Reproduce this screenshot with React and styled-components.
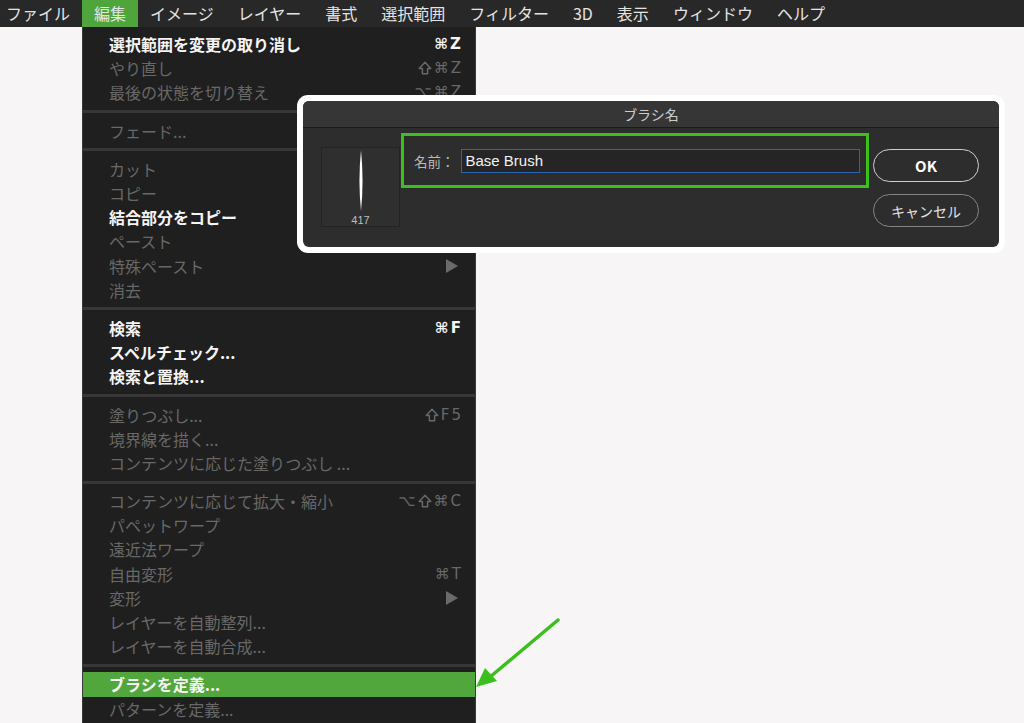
import React from "react";
import styled, { createGlobalStyle } from "styled-components";

const GlobalStyle = createGlobalStyle`
  html, body {
    margin: 0;
    padding: 0;
    background: #f7f5f6;
  }
  body {
    font-family: "Noto Sans CJK JP", "Noto Sans", sans-serif;
  }
`;

const Page = styled.div`
  position: relative;
  width: 1024px;
  height: 723px;
  overflow: hidden;
  display: flex;
  flex-direction: column;
`;

const MenuBar = styled.nav`
  display: flex;
  height: 27px;
  padding-left: 6px;
  background: #282828;
  flex-shrink: 0;
`;

const BarItem = styled.div`
  padding: 0 12px;
  line-height: 27px;
  font-size: 16px;
  color: #e4e4e4;
  background: ${(p) => (p.$open ? "#4fa53b" : "transparent")};

  &:first-child {
    padding-left: 0;
  }
`;

const Stage = styled.div`
  position: relative;
  flex: 1;
`;

const Dropdown = styled.div`
  position: absolute;
  left: 82px;
  top: 0;
  width: 392px;
  height: 700px;
  padding-top: 5px;
  background: #1f1f1f;
  border-left: 1px solid #3a3a3a;
  border-right: 1px solid #3a3a3a;
`;

const Row = styled.div`
  display: flex;
  align-items: center;
  justify-content: space-between;
  height: 24.2px;
  padding: 0 14px 0 26px;
  font-size: 16px;
  font-weight: ${(p) => (p.$on ? 700 : 400)};
  color: ${(p) => (p.$on ? "#f4f4f4" : "#686868")};
  background: ${(p) => (p.$active ? "#51a63c" : "transparent")};
  white-space: nowrap;
`;

const Keys = styled.span`
  display: flex;
  align-items: center;
  gap: 2px;
  font-family: "DejaVu Sans", "Liberation Sans", sans-serif;
  font-size: 15px;
`;

const SubArrow = styled.span`
  width: 0;
  height: 0;
  margin-right: 3px;
  border-top: 7px solid transparent;
  border-bottom: 7px solid transparent;
  border-left: 12px solid #6a6a6a;
`;

const Sep = styled.div`
  height: 3px;
  margin: 5.5px 0;
  background: #373737;
`;

const Frame = styled.div`
  position: absolute;
  left: 297px;
  top: 68px;
  padding: 6px;
  background: #ffffff;
  border-radius: 11px;
`;

const Dialog = styled.div`
  width: 696px;
  height: 146px;
  border-radius: 6px;
  background: #2d2d2d;
  overflow: hidden;
`;

const TitleBar = styled.div`
  height: 26px;
  line-height: 26px;
  text-align: center;
  font-size: 14px;
  color: #cdcdcd;
  background: #363636;
  border-bottom: 1px solid #1a1a1a;
`;

const Body = styled.div`
  display: flex;
  align-items: flex-start;
  padding: 5px 19px 0 18px;
`;

const Preview = styled.div`
  width: 79px;
  height: 80px;
  margin-top: 14px;
  box-sizing: border-box;
  border: 1px solid #232323;
  background: #2f2f2f;
  display: flex;
  flex-direction: column;
  align-items: center;
  padding-top: 2px;
`;

const Size = styled.span`
  font-family: "Liberation Sans", "DejaVu Sans", sans-serif;
  font-size: 11px;
  color: #bdbdbd;
  margin-top: 2px;
`;

const NameGroup = styled.div`
  width: 468px;
  height: 55px;
  margin-left: 1px;
  box-sizing: border-box;
  border: 3px solid #3cc01c;
  display: flex;
  align-items: center;
  gap: 6px;
  padding: 0 6px 0 10px;
`;

const Label = styled.span`
  font-size: 13.5px;
  color: #bcbcbc;
`;

const NameInput = styled.input`
  flex: 1;
  height: 24px;
  box-sizing: border-box;
  padding: 0 4px;
  border: 1px solid #2b63b5;
  background: #252525;
  color: #f2f2f2;
  font-family: "Liberation Sans", "DejaVu Sans", sans-serif;
  font-size: 15px;
  outline: none;
`;

const Buttons = styled.div`
  display: flex;
  flex-direction: column;
  gap: 12px;
  margin: 16px 0 0 4px;
`;

const Button = styled.div`
  width: 106px;
  height: 33px;
  box-sizing: border-box;
  border-radius: 17px;
  border: ${(p) => (p.$primary ? "1.5px solid #cfcfcf" : "1px solid #858585")};
  display: flex;
  align-items: center;
  justify-content: center;
  color: ${(p) => (p.$primary ? "#ffffff" : "#e2e2e2")};
  font-size: ${(p) => (p.$primary ? "15px" : "14px")};
  font-weight: ${(p) => (p.$primary ? 700 : 400)};
`;

const Pointer = styled.svg`
  position: absolute;
  left: 470px;
  top: 583px;
`;

const barItems = ["ファイル", "編集", "イメージ", "レイヤー", "書式", "選択範囲", "フィルター", "3D", "表示", "ウィンドウ", "ヘルプ"];

const sections = [
  [
    { label: "選択範囲を変更の取り消し", keys: "⌘Z", on: true },
    { label: "やり直し", keys: "⇧⌘Z" },
    { label: "最後の状態を切り替え", keys: "⌥⌘Z" },
  ],
  [{ label: "フェード..." }],
  [
    { label: "カット" },
    { label: "コピー" },
    { label: "結合部分をコピー", on: true },
    { label: "ペースト" },
    { label: "特殊ペースト", sub: true },
    { label: "消去" },
  ],
  [
    { label: "検索", keys: "⌘F", on: true },
    { label: "スペルチェック...", on: true },
    { label: "検索と置換...", on: true },
  ],
  [
    { label: "塗りつぶし...", keys: "⇧F5" },
    { label: "境界線を描く..." },
    { label: "コンテンツに応じた塗りつぶし ..." },
  ],
  [
    { label: "コンテンツに応じて拡大・縮小", keys: "⌥⇧⌘C" },
    { label: "パペットワープ" },
    { label: "遠近法ワープ" },
    { label: "自由変形", keys: "⌘T" },
    { label: "変形", sub: true },
    { label: "レイヤーを自動整列..." },
    { label: "レイヤーを自動合成..." },
  ],
  [
    { label: "ブラシを定義...", on: true, active: true },
    { label: "パターンを定義..." },
  ],
];

const ShiftIcon = () => (
  <svg width="14" height="14" viewBox="0 0 14 14">
    <path d="M7 1.2 L12.8 7.4 H9.6 V12.8 H4.4 V7.4 H1.2 Z" fill="none" stroke="currentColor" strokeWidth="1.5" strokeLinejoin="round" />
  </svg>
);

const Shortcut = ({ keys }) => (
  <Keys>
    {[...keys].map((k, i) => (k === "⇧" ? <ShiftIcon key={i} /> : <span key={i}>{k}</span>))}
  </Keys>
);

const BrushTip = () => (
  <svg width="10" height="64" viewBox="0 0 10 64">
    <path d="M5 0 Q8.2 32 5 63 Q1.8 32 5 0Z" fill="#ffffff" />
  </svg>
);

const EditMenu = () => (
  <Dropdown>
    {sections.map((items, i) => (
      <React.Fragment key={i}>
        {i > 0 && <Sep />}
        {items.map((item) => (
          <Row key={item.label} $on={item.on} $active={item.active}>
            <span>{item.label}</span>
            {item.keys && <Shortcut keys={item.keys} />}
            {item.sub && <SubArrow />}
          </Row>
        ))}
      </React.Fragment>
    ))}
  </Dropdown>
);

const BrushNameDialog = () => (
  <Frame>
    <Dialog>
      <TitleBar>ブラシ名</TitleBar>
      <Body>
        <Preview>
          <BrushTip />
          <Size>417</Size>
        </Preview>
        <NameGroup>
          <Label>名前：</Label>
          <NameInput readOnly value="Base Brush" />
        </NameGroup>
        <Buttons>
          <Button $primary>OK</Button>
          <Button>キャンセル</Button>
        </Buttons>
      </Body>
    </Dialog>
  </Frame>
);

export default function App() {
  return (
    <Page>
      <GlobalStyle />
      <MenuBar>
        {barItems.map((name) => (
          <BarItem key={name} $open={name === "編集"}>
            {name}
          </BarItem>
        ))}
      </MenuBar>
      <Stage>
        <EditMenu />
        <BrushNameDialog />
        <Pointer width="100" height="90" viewBox="0 0 100 90">
          <line x1="88" y1="10" x2="20" y2="67" stroke="#3cbf1e" strokeWidth="3.5" strokeLinecap="round" />
          <polygon points="6,77 15,58 27,71" fill="#3cbf1e" />
        </Pointer>
      </Stage>
    </Page>
  );
}
